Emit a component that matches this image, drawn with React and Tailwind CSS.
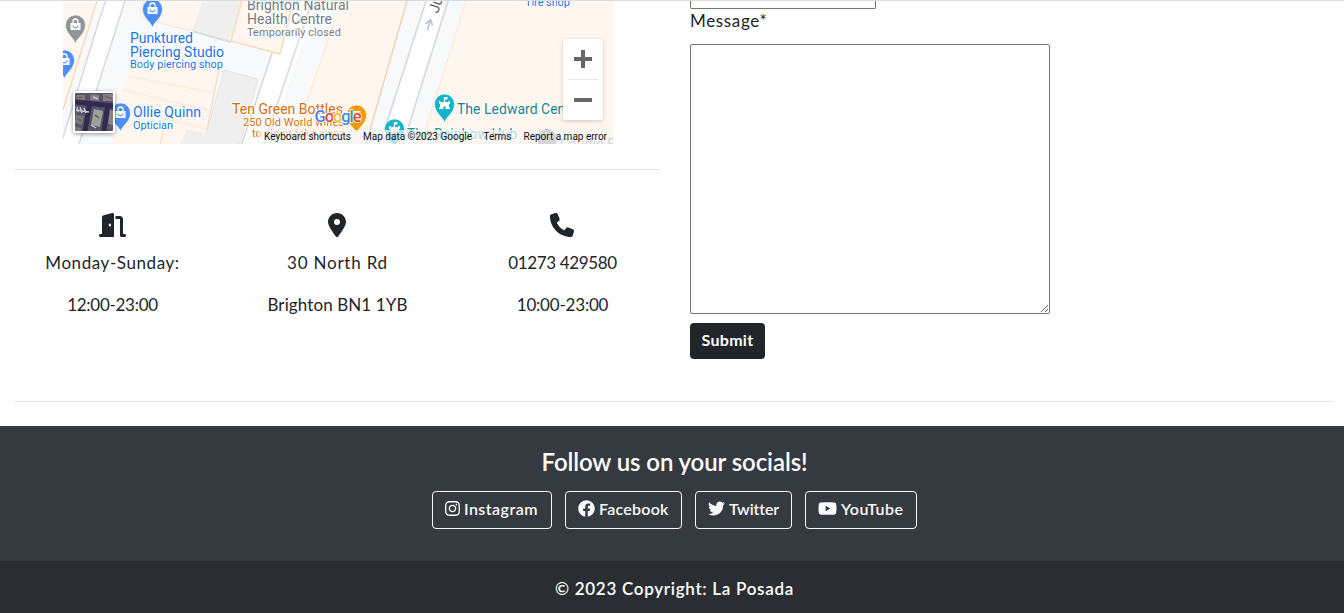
import React from "react";
import { FaFacebook, FaInstagram, FaTwitter, FaYoutube } from "react-icons/fa";
import { FaDoorOpen, FaLocationDot, FaPhone } from "react-icons/fa6";

function Pin({ x, y, color, kind }) {
  return (
    <g transform={`translate(${x} ${y})`}>
      <path
        d="M0 19 C-1 13 -10 9 -10 0 A10 10 0 0 1 10 0 C10 9 1 13 0 19Z"
        fill={color}
        stroke="#fff"
        strokeOpacity="0.7"
        strokeWidth="0.8"
      />
      {kind === "bag" && (
        <g>
          <path d="M-5 -2H5V5H-5Z" fill="#fff" />
          <path d="M-2.5 -2V-3.5A2.5 2.5 0 0 1 2.5 -3.5V-2" fill="none" stroke="#fff" strokeWidth="1.3" />
          <path d="M-2.5 0.5A2.5 2.3 0 0 0 2.5 0.5" fill="none" stroke={color} strokeWidth="1.2" />
        </g>
      )}
      {kind === "fort" && (
        <g fill="#fff">
          <path d="M-5.5 5V3.5H-4.5V0H-5.5V-3H-4V-2H4V-3H5.5V0H4.5V3.5H5.5V5H1.2V2.5H-1.2V5Z" />
          <path d="M-0.7 -2V-7H3V-4.5H0.6V-2Z" />
        </g>
      )}
      {kind === "bar" && <path d="M-4 -4H4V-2.5H-3V-1H4V1L1 3V5H-1V3L-4 0Z" fill="#fff" />}
    </g>
  );
}

function Label({ x, y, size, color, w, children }) {
  return (
    <text
      x={x}
      y={y}
      fontSize={size}
      fill={color}
      textLength={w}
      stroke="#fff"
      strokeWidth="2"
      paintOrder="stroke"
      strokeLinejoin="round"
    >
      {children}
    </text>
  );
}

function MapArt() {
  return (
    <svg className="block h-[143px] w-[550px] font-[Roboto,sans-serif]" viewBox="63 1 550 143">
      <rect x="63" y="1" width="550" height="143" fill="#f8f9fb" />
      <path d="M63 1H97L63 110Z" fill="#fff7ef" />
      <path d="M97 1L63 110" stroke="#f3d5b4" strokeWidth="1.2" />
      <path d="M105.500 1H125L79 144H60Z" fill="#fff" />
      <path d="M97 27L61 144M125 1L79 144" stroke="#d9dbe1" strokeWidth="1.6" />
      <path d="M97 27L105.500 1" stroke="#d9dbe1" strokeWidth="1.6" />
      <path d="M144 1H203L192 30L140 18Z" fill="#fff7ef" />
      <path d="M132 59L219 73L206 134L116 113Z" fill="#fff7ef" />
      <path d="M128 76L215 93M123 90L211 111M140 15L143 1M140 18L192 31M118 107L206 129" stroke="#fae5ce" strokeWidth="1" />
      <path d="M219 70L206 134" stroke="#f3d8bb" strokeWidth="1.2" />
      <path d="M203 1H242L231 41L192 31Z" fill="#efefef" />
      <path d="M192 31L231 42" stroke="#dadce1" strokeWidth="2" />
      <path d="M304 1H317L268 144H242L273 53H281L298 1Z" fill="#fff" />
      <path d="M242 1H293L280 54L231 41Z" fill="#fff7ef" />
      <path d="M242 1L231 41L280 54L293 1" fill="none" stroke="#f6dcbf" strokeWidth="1.500" />
      <path d="M224 70L258 79L240 144L206 134Z" fill="#efefef" stroke="#e5e5e5" />
      <path d="M118 126L162 126L187 129L182 144H110Z" fill="#fff7ef" />
      <path d="M187 129L238 142V144H180Z" fill="#efefef" />
      <path d="M164 129L160 144" stroke="#f3d8bb" />
      <path d="M272 53L242 144M312 1L264 144" stroke="#d9dbe1" strokeWidth="1.7" />
      <path d="M341 1H407L365 144H292L306 99Z" fill="#fff7ef" />
      <path d="M335 20L304 110" stroke="#fae5ce" />
      <path d="M407 1L366 144" stroke="#f0cfab" strokeWidth="1.3" />
      <path d="M426 1H448L403 144H380Z" fill="#fff" />
      <path d="M426 1L380 144M448 1L403 144" stroke="#d9dbe1" strokeWidth="1.8" />
      <path d="M466 1H613V144H421Z" fill="#fff7ef" />
      <path d="M466 1L421 144" stroke="#fbe6cb" />
      <path d="M427.500 30L430 21M425.500 24L430.500 19.500L432.500 25.500" fill="none" stroke="#bfc5d8" strokeWidth="1.8" />
      <text x="0" y="0" fontSize="15" fill="#5f6368" transform="translate(438 14) rotate(-72)">Jubilee</text>

      <Pin x={75.500} y={25} color="#8f9699" kind="bag" />
      <Pin x={64.500} y={60} color="#4d8ff5" kind="bag" />
      <Pin x={152.500} y={9} color="#4d8ff5" kind="bag" />
      <Pin x={120.500} y={113} color="#4d8ff5" kind="bag" />
      <Pin x={356.500} y={115} color="#f29900" kind="bar" />
      <Pin x={394.500} y={129} color="#12b5cb" kind="fort" />
      <Pin x={444.500} y={104} color="#12b5cb" kind="fort" />
      <Pin x={547} y={139} color="#80868b" />

      <Label x={130} y={43} size={14} color="#1a73e8" w={63}>Punktured</Label>
      <Label x={130} y={57} size={14} color="#1a73e8" w={94}>Piercing Studio</Label>
      <Label x={130} y={68} size={11} color="#1a73e8" w={93}>Body piercing shop</Label>
      <Label x={133} y={117} size={14} color="#1a73e8" w={68}>Ollie Quinn</Label>
      <Label x={133} y={129} size={11} color="#1a73e8" w={40}>Optician</Label>
      <Label x={247} y={10} size={14} color="#757b80" w={102}>Brighton Natural</Label>
      <Label x={247} y={24} size={14} color="#757b80" w={85}>Health Centre</Label>
      <Label x={247} y={36} size={11} color="#757b80" w={94}>Temporarily closed</Label>
      <Label x={525} y={6} size={11} color="#1a73e8" w={45}>Tire shop</Label>
      <Label x={232} y={114} size={14} color="#d56e0c" w={111}>Ten Green Bottles</Label>
      <Label x={243} y={126} size={11} color="#d56e0c" w={101}>250 Old World wines</Label>
      <Label x={252} y={137} size={11} color="#d56e0c" w={92}>to sip or take away</Label>
      <Label x={457} y={114} size={14} color="#12838f" w={125}>The Ledward Centre</Label>
      <Label x={407} y={139} size={14} color="#129aa8" w={110}>The Rainbow Hub</Label>
      <Label x={560} y={149} size={14} color="#80868b">Caudio Five</Label>

      <text
        x="314.500"
        y="122"
        fontSize="16.500"
        fontWeight="500"
        textLength="47"
        stroke="#fff"
        strokeWidth="1.500"
        paintOrder="stroke"
      >
        <tspan fill="#4285f4">G</tspan>
        <tspan fill="#ea4335">o</tspan>
        <tspan fill="#fbbc04">o</tspan>
        <tspan fill="#4285f4">g</tspan>
        <tspan fill="#34a853">l</tspan>
        <tspan fill="#ea4335">e</tspan>
      </text>
      <path d="M258 130H613V144H258Z" fill="#f5f5f5" fillOpacity="0.7" />
      <g fontSize="10" fill="#111">
        <text x="264" y="140" textLength="87">Keyboard shortcuts</text>
        <text x="363" y="140" textLength="109">Map data ©2023 Google</text>
        <text x="483.500" y="140" textLength="28">Terms</text>
        <text x="523.500" y="140" textLength="83.500">Report a map error</text>
      </g>
    </svg>
  );
}

function Satellite() {
  return (
    <svg className="block size-full" viewBox="0 0 38 38">
      <rect width="38" height="38" fill="#5a546a" />
      <path d="M0 9L38 13M15 9L10 38M33 10L29 38" stroke="#2f2b52" strokeWidth="5" />
      <path d="M2 2H10V7L1 6ZM16 1L24 2V8L15 7ZM28 1H38V8L28 8Z" fill="#8a7d85" />
      <path d="M1 22L9 23L7 32L0 30ZM0 34L6 35L6 38H0Z" fill="#777b74" />
      <path d="M19 16L28 18L25 34L16 32Z" fill="#9da19c" />
      <path d="M35 17L38 18V32L33 31Z" fill="#8b8587" />
      <path d="M2 14L3 19M5 14L7 20M9 15L11 20M1 17L14 19M18 4L23 6M16 32L21 35" stroke="#cbc4cc" strokeWidth="1.4" />
      <path d="M30 3L37 6M1 5L8 4M32 35L37 33M20 22L24 25M3 26L7 28" stroke="#765d5a" strokeWidth="1.6" />
    </svg>
  );
}

function LocationMap() {
  return (
    <div className="relative ml-12 h-[143px] w-[550px] overflow-hidden">
      <MapArt />
      <div className="absolute left-[10px] top-[90px] size-[42px] overflow-hidden rounded-[3px] border-2 border-white shadow-[0_1px_4px_rgba(0,0,0,0.4)]">
        <Satellite />
      </div>
      <div className="absolute left-[500px] top-[38px] flex h-[81px] w-10 flex-col items-center rounded-[2px] bg-white shadow-[0_1px_4px_rgba(0,0,0,0.2)]">
        <svg className="block h-10 w-10" viewBox="0 0 40 40"><path d="M11 20H29M20 11V29" stroke="#666" strokeWidth="4" /></svg>
        <div className="h-px w-[30px] bg-[#e6e6e6]" />
        <svg className="block h-10 w-10" viewBox="0 0 40 40"><path d="M11 20H29" stroke="#666" strokeWidth="4" /></svg>
      </div>
    </div>
  );
}

function Info({ icon, first, second }) {
  return (
    <div className="flex w-[225px] flex-col items-center text-[17px] leading-[26px]">
      <div className="flex h-6 items-center pr-px text-2xl">{icon}</div>
      <p className="mt-[13px]">{first}</p>
      <p className="mt-4">{second}</p>
    </div>
  );
}

function Social({ icon, className, children }) {
  return (
    <a className={`flex h-[38px] items-center gap-1 rounded border border-[#f8f9fa] pb-[3px] pl-3 text-base font-semibold text-[#f8f9fa] ${className}`}>
      {icon}
      <span className="whitespace-nowrap">{children}</span>
    </a>
  );
}

export default function App() {
  return (
    <div className="flex h-[613px] w-[1344px] flex-col overflow-hidden border-t border-[#dadce0] bg-white font-[Lato,sans-serif] text-[#212529]">
      <main className="flex h-[400px] shrink-0">
        <section className="w-[675px] pl-[15px]">
          <LocationMap />
          <div className="mt-[25px] h-px w-[645px] bg-[#e4e4e5]" />
          <div className="-ml-[15px] mt-[43px] flex">
            <Info
              icon={<FaDoorOpen className="h-6 w-[27px]" />}
              first={<span className="tracking-[0.58px]">Monday-Sunday:</span>}
              second={<span className="tracking-[-0.28px]">12:00-23:00</span>}
            />
            <Info
              icon={<FaLocationDot />}
              first={<span className="tracking-[0.78px]">30 North Rd</span>}
              second={<span className="tracking-[0.1px]">Brighton BN1 1YB</span>}
            />
            <Info
              icon={<FaPhone />}
              first={<span className="tracking-[-0.38px]">01273 429580</span>}
              second={<span className="tracking-[-0.2px]">10:00-23:00</span>}
            />
          </div>
        </section>
        <section className="flex flex-col items-start pl-[15px]">
          <div className="h-2 w-[186px] rounded-b-[2px] border border-t-0 border-[#767676]" />
          <label className="h-[35px] text-[17px] leading-[24px] tracking-[0.65px]">Message*</label>
          <textarea className="block h-[270px] w-[360px] shrink-0 resize rounded-[2px] border border-[#767676] bg-white" />
          <button className="mt-[9px] h-9 w-[75px] rounded bg-[#212529] pb-[3px] text-base font-bold tracking-[0.3px] text-white">Submit</button>
        </section>
      </main>
      <div className="ml-[15px] h-px w-[1319px] shrink-0 bg-[#e4e4e5]" />
      <footer className="mt-6 flex grow flex-col bg-[#343a40] text-white">
        <div className="flex h-[135px] w-[1349px] flex-col items-center">
          <h2 className="mt-[21px] text-[24px] font-semibold leading-[29px] tracking-[-0.1px]">Follow us on your socials!</h2>
          <div className="mt-[15px] flex gap-[13px]">
            <Social className="w-[120px] tracking-[0.45px]" icon={<FaInstagram className="h-[17px] w-[15px]" />}>Instagram</Social>
            <Social className="w-[117px] tracking-[0.25px]" icon={<FaFacebook className="size-[17px]" />}>Facebook</Social>
            <Social className="w-[97px] tracking-[-0.1px]" icon={<FaTwitter className="size-[17px]" />}>Twitter</Social>
            <Social className="w-[112px] tracking-[0.45px]" icon={<FaYoutube className="h-[17px] w-[19px]" />}>YouTube</Social>
          </div>
        </div>
        <div className="h-[52px] bg-[#2a2e33]">
          <div className="flex h-full w-[1349px] items-center justify-center pt-[3px] text-[17px] font-semibold tracking-[0.71px]">
            © 2023 Copyright: La Posada
          </div>
        </div>
      </footer>
    </div>
  );
}
